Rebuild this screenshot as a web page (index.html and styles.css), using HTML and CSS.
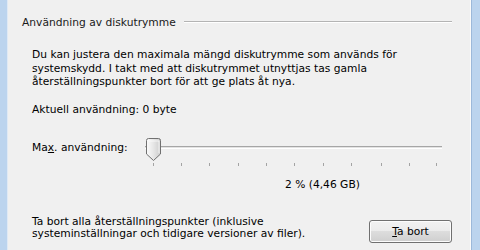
FILE: index.html
```html
<!DOCTYPE html>
<html lang="sv">
<head>
  <meta charset="UTF-8">
  <title>Systemskydd</title>
  <link rel="stylesheet" href="styles.css">
</head>
<body>
  <div class="ram">
    <div class="kant-vanster"></div>
    <div class="panel">
      <div class="rubrik">
        <span>Användning av diskutrymme</span>
        <div class="linje"></div>
      </div>

      <div class="innehall">
        <p class="info">Du kan justera den maximala mängd diskutrymme som används för<br>systemskydd. I takt med att diskutrymmet utnyttjas tas gamla<br>återställningspunkter bort för att ge plats åt nya.</p>

        <p class="aktuell">Aktuell användning: 0 byte</p>

        <div class="reglage-rad">
          <label>Ma<u>x</u>. användning:</label>
          <svg class="reglage" width="300" height="32" viewBox="0 0 300 32">
            <rect x="1" y="9" width="297" height="1" fill="#a6a6a6"/>
            <rect x="1" y="10" width="297" height="1" fill="#e3e3e3"/>
            <rect x="1" y="11" width="297" height="1" fill="#ffffff"/>
            <g fill="#a3a3a3">
              <rect x="9" y="26" width="1" height="3"/>
              <rect x="37" y="26" width="1" height="3"/>
              <rect x="65" y="26" width="1" height="3"/>
              <rect x="94" y="26" width="1" height="3"/>
              <rect x="122" y="26" width="1" height="3"/>
              <rect x="150" y="26" width="1" height="3"/>
              <rect x="179" y="26" width="1" height="3"/>
              <rect x="207" y="26" width="1" height="3"/>
              <rect x="237" y="26" width="1" height="3"/>
              <rect x="265" y="26" width="1" height="3"/>
              <rect x="292" y="26" width="1" height="3"/>
            </g>
            <defs>
              <linearGradient id="tumme" x1="0" y1="0" x2="1" y2="0">
                <stop offset="0" stop-color="#fbfbfb"/>
                <stop offset="0.5" stop-color="#e6e6e6"/>
                <stop offset="1" stop-color="#cdcdcd"/>
              </linearGradient>
            </defs>
            <path d="M2.5 3.5 Q2.5 1.5 4.5 1.5 H14.5 Q16.5 1.5 16.5 3.5 V17 L9.5 23.5 L2.5 17 Z" fill="url(#tumme)" stroke="#707070" stroke-width="1"/>
            <path d="M4 4 H15 V16" fill="none" stroke="#ffffff" stroke-width="1" opacity="0.7"/>
          </svg>
        </div>

        <div class="varde">2 % (4,46 GB)</div>

        <div class="ta-bort-rad">
          <p>Ta bort alla återställningspunkter (inklusive<br>systeminställningar och tidigare versioner av filer).</p>
          <button class="knapp"><u>T</u>a bort</button>
        </div>
      </div>
    </div>
    <div class="kant-hoger"></div>
  </div>
</body>
</html>
```

FILE: styles.css
```css
body {
  margin: 0;
  background: #bcd4ee;
  font-family: 'DejaVu Sans', 'Noto Sans', sans-serif;
  font-size: 10.7px;
  color: #000;
}

.ram {
  display: flex;
  width: 480px;
  height: 250px;
  overflow: hidden;
}

.kant-vanster {
  width: 7px;
  background: #bcd4ee;
  border-right: 1px solid #dfe9f5;
}

.kant-hoger {
  width: 8px;
  background: #bcd4ee;
  border-left: 1px solid #9db9da;
}

.panel {
  flex: 1;
  background: #f0f0f0;
  border-right: 1px solid #fbfbfb;
  padding-top: 15px;
}

.rubrik {
  display: flex;
  align-items: center;
  padding-left: 14px;
  padding-right: 18px;
  height: 14px;
}

.rubrik span {
  color: #1a1a1a;
  white-space: nowrap;
}

.linje {
  flex: 1;
  margin-left: 8px;
  border-top: 1px solid #b4b4b4;
  border-bottom: 1px solid #ffffff;
}

.innehall {
  padding-left: 24px;
  padding-right: 18px;
}

.info {
  margin: 19px 0 0 0;
  line-height: 13.5px;
}

.aktuell {
  margin: 14px 0 0 0;
  line-height: 14px;
}

.reglage-rad {
  display: flex;
  align-items: flex-start;
  margin-top: 22px;
}

.reglage-rad label {
  width: 112px;
  line-height: 14px;
  margin-top: 2px;
}

.reglage {
  display: block;
  margin-top: -2px;
}

.varde {
  margin-top: 9px;
  padding-left: 253px;
  line-height: 14px;
}

.ta-bort-rad {
  display: flex;
  justify-content: space-between;
  align-items: flex-start;
  margin-top: 24px;
}

.ta-bort-rad p {
  margin: 0;
  line-height: 12px;
}

.knapp {
  width: 83px;
  height: 23px;
  margin-top: 4px;
  border: 1px solid #707070;
  border-radius: 3px;
  background: linear-gradient(#f2f2f2 0%, #ebebeb 50%, #dddddd 50%, #cfcfcf 100%);
  box-shadow: inset 0 0 0 1px #fcfcfc;
  font-family: inherit;
  font-size: 10.7px;
  color: #000;
  padding: 0;
}
```
